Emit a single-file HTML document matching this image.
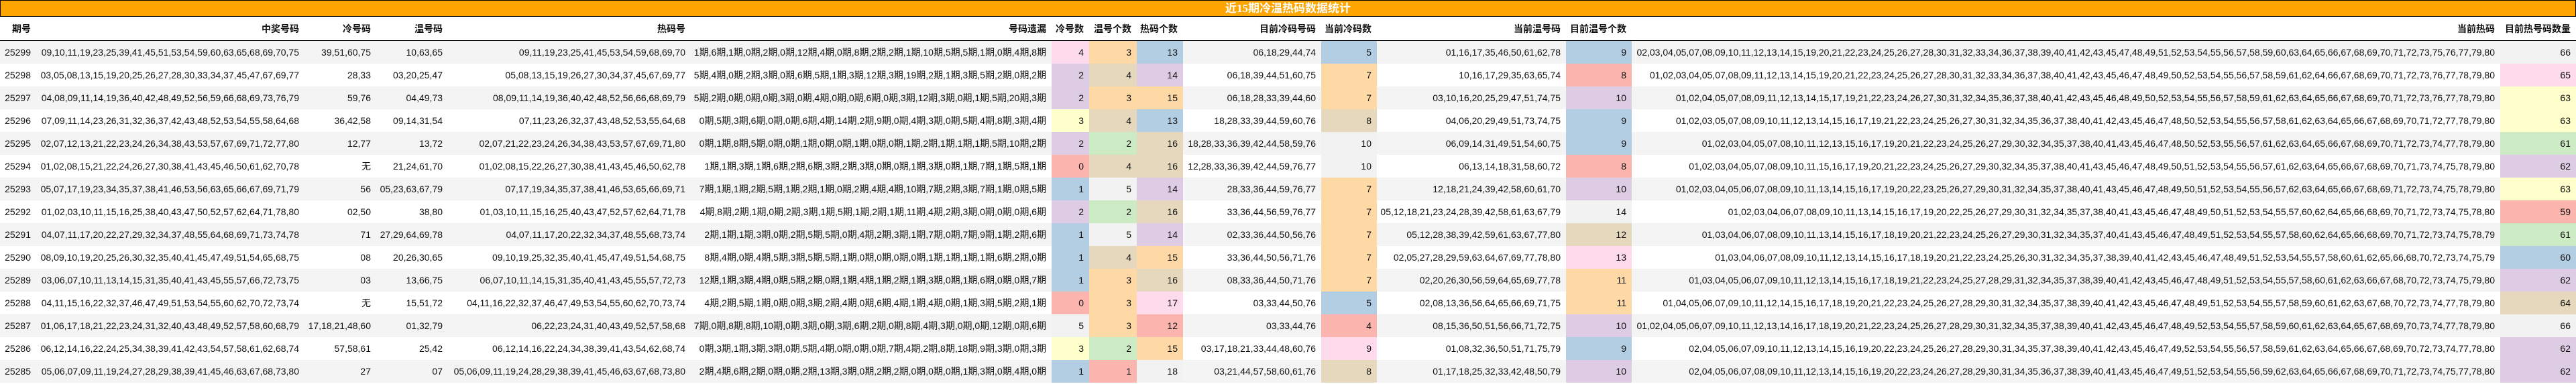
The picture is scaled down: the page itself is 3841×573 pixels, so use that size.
<!DOCTYPE html>
<html><head><meta charset="utf-8">
<style>
html,body{margin:0;padding:0;background:#fff;}
body{width:3841px;height:573px;overflow:hidden;font-family:"Liberation Sans","Noto Sans CJK SC",sans-serif;font-size:14px;color:#111;}
.title{position:absolute;left:0;top:0;width:3839px;height:23px;background:#FFA500;border:1px solid #000;color:#fff;font-weight:bold;font-size:17px;text-align:center;line-height:23px;font-family:"Liberation Serif","Noto Sans CJK SC",serif;}
table{position:absolute;left:0;top:25px;border-collapse:collapse;table-layout:fixed;width:3841px;}
td,th{white-space:nowrap;overflow:hidden;text-align:right;padding:0 8px 0 0;height:34px;}
th{height:35px;font-weight:bold;border-bottom:1px solid #000;}
tr.o td{background:#f4f4f4;}
tr td.P{background:#fddaec}tr td.O{background:#fed9a6}tr td.B{background:#b3cde3}tr td.L{background:#decbe4}tr td.T{background:#e5d8bd}tr td.G{background:#ccebc5}tr td.Y{background:#ffffcc}tr td.S{background:#fbb4ae}tr td.N{background:#f2f2f2}
</style></head><body>
<div class="title">近15期冷温热码数据统计</div>
<table>
<colgroup><col style="width:54px"><col style="width:400px"><col style="width:107px"><col style="width:107px"><col style="width:362px"><col style="width:538px"><col style="width:56px"><col style="width:71px"><col style="width:69px"><col style="width:206px"><col style="width:83px"><col style="width:282px"><col style="width:98px"><col style="width:1295px"><col style="width:113px"></colgroup>
<tr><th>期号</th><th>中奖号码</th><th>冷号码</th><th>温号码</th><th>热码号</th><th>号码遗漏</th><th>冷号数</th><th>温号个数</th><th>热码个数</th><th>目前冷码号码</th><th>当前冷码数</th><th>当前温号码</th><th>目前温号个数</th><th>当前热码</th><th>目前热号码数量</th></tr>
<tr class="o"><td>25299</td><td>09,10,11,19,23,25,39,41,45,51,53,54,59,60,63,65,68,69,70,75</td><td>39,51,60,75</td><td>10,63,65</td><td>09,11,19,23,25,41,45,53,54,59,68,69,70</td><td>1期,6期,1期,0期,2期,0期,12期,4期,0期,8期,2期,2期,1期,10期,5期,5期,1期,0期,4期,8期</td><td class="P">4</td><td class="O">3</td><td class="B">13</td><td>06,18,29,44,74</td><td class="B">5</td><td>01,16,17,35,46,50,61,62,78</td><td class="B">9</td><td>02,03,04,05,07,08,09,10,11,12,13,14,15,19,20,21,22,23,24,25,26,27,28,30,31,32,33,34,36,37,38,39,40,41,42,43,45,47,48,49,51,52,53,54,55,56,57,58,59,60,63,64,65,66,67,68,69,70,71,72,73,75,76,77,79,80</td><td class="N">66</td></tr>
<tr><td>25298</td><td>03,05,08,13,15,19,20,25,26,27,28,30,33,34,37,45,47,67,69,77</td><td>28,33</td><td>03,20,25,47</td><td>05,08,13,15,19,26,27,30,34,37,45,67,69,77</td><td>5期,4期,0期,2期,3期,0期,6期,5期,1期,3期,12期,3期,19期,2期,1期,3期,5期,2期,0期,2期</td><td class="L">2</td><td class="T">4</td><td class="L">14</td><td>06,18,39,44,51,60,75</td><td class="O">7</td><td>10,16,17,29,35,63,65,74</td><td class="S">8</td><td>01,02,03,04,05,07,08,09,11,12,13,14,15,19,20,21,22,23,24,25,26,27,28,30,31,32,33,34,36,37,38,40,41,42,43,45,46,47,48,49,50,52,53,54,55,56,57,58,59,61,62,64,66,67,68,69,70,71,72,73,76,77,78,79,80</td><td class="P">65</td></tr>
<tr class="o"><td>25297</td><td>04,08,09,11,14,19,36,40,42,48,49,52,56,59,66,68,69,73,76,79</td><td>59,76</td><td>04,49,73</td><td>08,09,11,14,19,36,40,42,48,52,56,66,68,69,79</td><td>5期,2期,0期,0期,0期,3期,0期,4期,0期,0期,6期,0期,3期,12期,3期,0期,1期,5期,20期,3期</td><td class="L">2</td><td class="O">3</td><td class="O">15</td><td>06,18,28,33,39,44,60</td><td class="O">7</td><td>03,10,16,20,25,29,47,51,74,75</td><td class="L">10</td><td>01,02,04,05,07,08,09,11,12,13,14,15,17,19,21,22,23,24,26,27,30,31,32,34,35,36,37,38,40,41,42,43,45,46,48,49,50,52,53,54,55,56,57,58,59,61,62,63,64,65,66,67,68,69,70,71,72,73,76,77,78,79,80</td><td class="Y">63</td></tr>
<tr><td>25296</td><td>07,09,11,14,23,26,31,32,36,37,42,43,48,52,53,54,55,58,64,68</td><td>36,42,58</td><td>09,14,31,54</td><td>07,11,23,26,32,37,43,48,52,53,55,64,68</td><td>0期,5期,3期,6期,0期,0期,6期,4期,14期,2期,9期,0期,4期,3期,0期,5期,4期,8期,3期,4期</td><td class="Y">3</td><td class="T">4</td><td class="B">13</td><td>18,28,33,39,44,59,60,76</td><td class="T">8</td><td>04,06,20,29,49,51,73,74,75</td><td class="B">9</td><td>01,02,03,05,07,08,09,10,11,12,13,14,15,16,17,19,21,22,23,24,25,26,27,30,31,32,34,35,36,37,38,40,41,42,43,45,46,47,48,50,52,53,54,55,56,57,58,61,62,63,64,65,66,67,68,69,70,71,72,77,78,79,80</td><td class="Y">63</td></tr>
<tr class="o"><td>25295</td><td>02,07,12,13,21,22,23,24,26,34,38,43,53,57,67,69,71,72,77,80</td><td>12,77</td><td>13,72</td><td>02,07,21,22,23,24,26,34,38,43,53,57,67,69,71,80</td><td>0期,1期,8期,5期,0期,0期,1期,0期,0期,1期,0期,0期,1期,2期,1期,1期,1期,5期,10期,2期</td><td class="L">2</td><td class="G">2</td><td class="T">16</td><td>18,28,33,36,39,42,44,58,59,76</td><td class="N">10</td><td>06,09,14,31,49,51,54,60,75</td><td class="B">9</td><td>01,02,03,04,05,07,08,10,11,12,13,15,16,17,19,20,21,22,23,24,25,26,27,29,30,32,34,35,37,38,40,41,43,45,46,47,48,50,52,53,55,56,57,61,62,63,64,65,66,67,68,69,70,71,72,73,74,77,78,79,80</td><td class="G">61</td></tr>
<tr><td>25294</td><td>01,02,08,15,21,22,24,26,27,30,38,41,43,45,46,50,61,62,70,78</td><td>无</td><td>21,24,61,70</td><td>01,02,08,15,22,26,27,30,38,41,43,45,46,50,62,78</td><td>1期,1期,3期,1期,6期,2期,6期,3期,2期,3期,0期,0期,1期,3期,0期,1期,7期,1期,5期,1期</td><td class="S">0</td><td class="T">4</td><td class="T">16</td><td>12,28,33,36,39,42,44,59,76,77</td><td class="N">10</td><td>06,13,14,18,31,58,60,72</td><td class="S">8</td><td>01,02,03,04,05,07,08,09,10,11,15,16,17,19,20,21,22,23,24,25,26,27,29,30,32,34,35,37,38,40,41,43,45,46,47,48,49,50,51,52,53,54,55,56,57,61,62,63,64,65,66,67,68,69,70,71,73,74,75,78,79,80</td><td class="L">62</td></tr>
<tr class="o"><td>25293</td><td>05,07,17,19,23,34,35,37,38,41,46,53,56,63,65,66,67,69,71,79</td><td>56</td><td>05,23,63,67,79</td><td>07,17,19,34,35,37,38,41,46,53,65,66,69,71</td><td>7期,1期,1期,2期,5期,1期,2期,1期,0期,2期,4期,4期,10期,7期,2期,3期,7期,1期,0期,5期</td><td class="B">1</td><td class="N">5</td><td class="L">14</td><td>28,33,36,44,59,76,77</td><td class="O">7</td><td>12,18,21,24,39,42,58,60,61,70</td><td class="L">10</td><td>01,02,03,04,05,06,07,08,09,10,11,13,14,15,16,17,19,20,22,23,25,26,27,29,30,31,32,34,35,37,38,40,41,43,45,46,47,48,49,50,51,52,53,54,55,56,57,62,63,64,65,66,67,68,69,71,72,73,74,75,78,79,80</td><td class="Y">63</td></tr>
<tr><td>25292</td><td>01,02,03,10,11,15,16,25,38,40,43,47,50,52,57,62,64,71,78,80</td><td>02,50</td><td>38,80</td><td>01,03,10,11,15,16,25,40,43,47,52,57,62,64,71,78</td><td>4期,8期,2期,1期,0期,2期,3期,1期,5期,1期,2期,1期,11期,4期,2期,3期,0期,0期,0期,6期</td><td class="L">2</td><td class="G">2</td><td class="T">16</td><td>33,36,44,56,59,76,77</td><td class="O">7</td><td>05,12,18,21,23,24,28,39,42,58,61,63,67,79</td><td class="N">14</td><td>01,02,03,04,06,07,08,09,10,11,13,14,15,16,17,19,20,22,25,26,27,29,30,31,32,34,35,37,38,40,41,43,45,46,47,48,49,50,51,52,53,54,55,57,60,62,64,65,66,68,69,70,71,72,73,74,75,78,80</td><td class="S">59</td></tr>
<tr class="o"><td>25291</td><td>04,07,11,17,20,22,27,29,32,34,37,48,55,64,68,69,71,73,74,78</td><td>71</td><td>27,29,64,69,78</td><td>04,07,11,17,20,22,32,34,37,48,55,68,73,74</td><td>2期,1期,1期,3期,0期,2期,5期,5期,0期,4期,2期,3期,1期,7期,0期,7期,9期,1期,2期,6期</td><td class="B">1</td><td class="N">5</td><td class="L">14</td><td>02,33,36,44,50,56,76</td><td class="O">7</td><td>05,12,28,38,39,42,59,61,63,67,77,80</td><td class="T">12</td><td>01,03,04,06,07,08,09,10,11,13,14,15,16,17,18,19,20,21,22,23,24,25,26,27,29,30,31,32,34,35,37,40,41,43,45,46,47,48,49,51,52,53,54,55,57,58,60,62,64,65,66,68,69,70,71,72,73,74,75,78,79</td><td class="G">61</td></tr>
<tr><td>25290</td><td>08,09,10,19,20,25,26,30,32,35,40,41,45,47,49,51,54,65,68,75</td><td>08</td><td>20,26,30,65</td><td>09,10,19,25,32,35,40,41,45,47,49,51,54,68,75</td><td>8期,4期,0期,4期,5期,3期,5期,5期,1期,0期,0期,0期,0期,1期,1期,1期,1期,6期,2期,0期</td><td class="B">1</td><td class="T">4</td><td class="O">15</td><td>33,36,44,50,56,71,76</td><td class="O">7</td><td>02,05,27,28,29,59,63,64,67,69,77,78,80</td><td class="P">13</td><td>01,03,04,06,07,08,09,10,11,12,13,14,15,16,17,18,19,20,21,22,23,24,25,26,30,31,32,34,35,37,38,39,40,41,42,43,45,46,47,48,49,51,52,53,54,55,57,58,60,61,62,65,66,68,70,72,73,74,75,79</td><td class="B">60</td></tr>
<tr class="o"><td>25289</td><td>03,06,07,10,11,13,14,15,31,35,40,41,43,45,55,57,66,72,73,75</td><td>03</td><td>13,66,75</td><td>06,07,10,11,14,15,31,35,40,41,43,45,55,57,72,73</td><td>12期,1期,3期,4期,0期,5期,2期,0期,1期,4期,1期,2期,1期,3期,0期,1期,6期,0期,0期,7期</td><td class="B">1</td><td class="O">3</td><td class="T">16</td><td>08,33,36,44,50,71,76</td><td class="O">7</td><td>02,20,26,30,56,59,64,65,69,77,78</td><td class="O">11</td><td>01,03,04,05,06,07,09,10,11,12,13,14,15,16,17,18,19,21,22,23,24,25,27,28,29,31,32,34,35,37,38,39,40,41,42,43,45,46,47,48,49,51,52,53,54,55,57,58,60,61,62,63,66,67,68,70,72,73,74,75,79,80</td><td class="L">62</td></tr>
<tr><td>25288</td><td>04,11,15,16,22,32,37,46,47,49,51,53,54,55,60,62,70,72,73,74</td><td>无</td><td>15,51,72</td><td>04,11,16,22,32,37,46,47,49,53,54,55,60,62,70,73,74</td><td>4期,2期,5期,1期,0期,0期,3期,2期,4期,0期,6期,4期,1期,4期,0期,1期,3期,5期,2期,1期</td><td class="S">0</td><td class="O">3</td><td class="P">17</td><td>03,33,44,50,76</td><td class="B">5</td><td>02,08,13,36,56,64,65,66,69,71,75</td><td class="O">11</td><td>01,04,05,06,07,09,10,11,12,14,15,16,17,18,19,20,21,22,23,24,25,26,27,28,29,30,31,32,34,35,37,38,39,40,41,42,43,45,46,47,48,49,51,52,53,54,55,57,58,59,60,61,62,63,67,68,70,72,73,74,77,78,79,80</td><td class="T">64</td></tr>
<tr class="o"><td>25287</td><td>01,06,17,18,21,22,23,24,31,32,40,43,48,49,52,57,58,60,68,79</td><td>17,18,21,48,60</td><td>01,32,79</td><td>06,22,23,24,31,40,43,49,52,57,58,68</td><td>7期,0期,8期,8期,10期,0期,3期,0期,3期,6期,2期,0期,8期,4期,3期,0期,0期,12期,0期,6期</td><td class="N">5</td><td class="O">3</td><td class="S">12</td><td>03,33,44,76</td><td class="S">4</td><td>08,15,36,50,51,56,66,71,72,75</td><td class="L">10</td><td>01,02,04,05,06,07,09,10,11,12,13,14,16,17,18,19,20,21,22,23,24,25,26,27,28,29,30,31,32,34,35,37,38,39,40,41,42,43,45,46,47,48,49,52,53,54,55,57,58,59,60,61,62,63,64,65,67,68,69,70,73,74,77,78,79,80</td><td class="N">66</td></tr>
<tr><td>25286</td><td>06,12,14,16,22,24,25,34,38,39,41,42,43,54,57,58,61,62,68,74</td><td>57,58,61</td><td>25,42</td><td>06,12,14,16,22,24,34,38,39,41,43,54,62,68,74</td><td>0期,3期,1期,3期,3期,0期,5期,4期,0期,0期,0期,7期,4期,2期,8期,18期,9期,3期,0期,3期</td><td class="Y">3</td><td class="G">2</td><td class="O">15</td><td>03,17,18,21,33,44,48,60,76</td><td class="P">9</td><td>01,08,32,36,50,51,71,75,79</td><td class="B">9</td><td>02,04,05,06,07,09,10,11,12,13,14,15,16,19,20,22,23,24,25,26,27,28,29,30,31,34,35,37,38,39,40,41,42,43,45,46,47,49,52,53,54,55,56,57,58,59,61,62,63,64,65,66,67,68,69,70,72,73,74,77,78,80</td><td class="L">62</td></tr>
<tr class="o"><td>25285</td><td>05,06,07,09,11,19,24,27,28,29,38,39,41,45,46,63,67,68,73,80</td><td>27</td><td>07</td><td>05,06,09,11,19,24,28,29,38,39,41,45,46,63,67,68,73,80</td><td>2期,4期,6期,2期,0期,0期,2期,13期,3期,0期,2期,2期,0期,0期,0期,1期,3期,0期,4期,0期</td><td class="B">1</td><td class="S">1</td><td class="N">18</td><td>03,21,44,57,58,60,61,76</td><td class="T">8</td><td>01,17,18,25,32,33,42,48,50,79</td><td class="L">10</td><td>02,04,05,06,07,08,09,10,11,12,13,14,15,16,19,20,22,23,24,26,27,28,29,30,31,34,35,36,37,38,39,40,41,43,45,46,47,49,51,52,53,54,55,56,59,62,63,64,65,66,67,68,69,70,71,72,73,74,75,77,78,80</td><td class="L">62</td></tr>
</table>
</body></html>
